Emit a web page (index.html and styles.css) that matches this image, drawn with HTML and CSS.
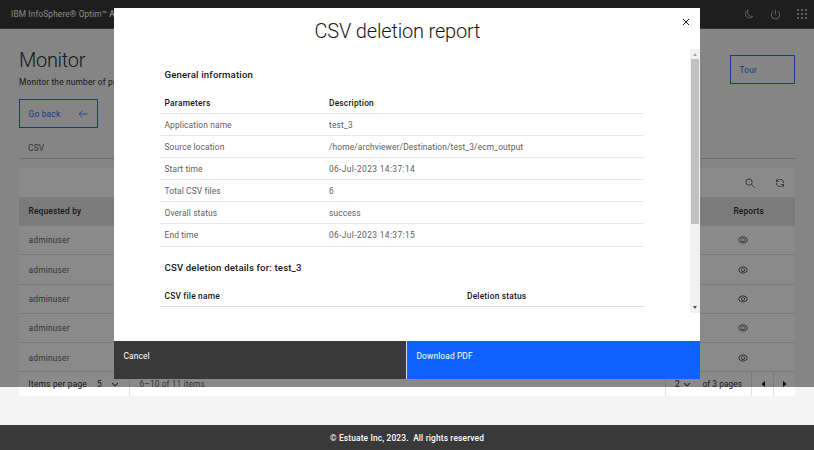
FILE: index.html
```html
<!DOCTYPE html>
<html lang="en">
<head>
<meta charset="utf-8">
<title>Monitor</title>
<link rel="stylesheet" href="styles.css">
</head>
<body>
<svg class="defs" width="0" height="0">
  <symbol id="eye" viewBox="0 0 32 32"><path fill="currentColor" d="M30.94 15.66A16.69 16.69 0 0 0 16 5 16.69 16.69 0 0 0 1.06 15.66a1 1 0 0 0 0 .68A16.69 16.69 0 0 0 16 27a16.69 16.69 0 0 0 14.94-10.66 1 1 0 0 0 0-.68zM16 25c-5.3 0-10.9-3.93-12.93-9C5.1 10.93 10.7 7 16 7s10.9 3.93 12.93 9C26.9 21.07 21.3 25 16 25z"/><path fill="currentColor" d="M16 10a6 6 0 1 0 6 6 6 6 0 0 0-6-6zm0 10a4 4 0 1 1 4-4 4 4 0 0 1-4 4z"/></symbol>
  <symbol id="chevron" viewBox="0 0 16 16"><path fill="currentColor" d="M8 12 3 7l1-1 4 4 4-4 1 1z"/></symbol>
</svg>
<header class="topbar">
  <div class="brand">IBM InfoSphere® Optim™ <b>Archive Viewer</b></div>
  <svg class="moon" viewBox="0 0 10 10"><path fill="none" stroke="currentColor" stroke-width=".9" d="M4.200 1.200C1.500 2 .900 5 2.200 7.100c1.500 2.300 4.900 2.400 6.500.1-1.700.5-3.400 0-4.400-1.400-1-1.500-.9-3.200-.1-4.600z"/></svg>
  <svg class="power" viewBox="0 0 32 32"><path fill="currentColor" d="m22.5 5.74-1 1.73a11 11 0 1 1-11 0l-1-1.73a13 13 0 1 0 13 0z"/><path fill="currentColor" d="M15 2h2v14h-2z"/></svg>
  <svg class="apps" viewBox="0 0 10 10"><path fill="currentColor" d="M0 0h2v2H0zM4 0h2v2H4zM8 0h2v2H8zM0 4h2v2H0zM4 4h2v2H4zM8 4h2v2H8zM0 8h2v2H0zM4 8h2v2H4zM8 8h2v2H8z"/></svg>
</header>
<main class="page">
  <div class="page-head">
    <div>
      <h1>Monitor</h1>
      <p class="lead">Monitor the number of processes</p>
    </div>
    <button class="outline tour">Tour</button>
  </div>
  <button class="outline back"><span>Go back</span><svg viewBox="0 0 16 16"><path fill="none" stroke="currentColor" stroke-width="1.3" d="M15 8H2M7 2.700 1.700 8 7 13.300"/></svg></button>
  <div class="tab">CSV</div>
  <section class="table">
    <div class="toolbar">
      <svg viewBox="0 0 16 16"><path fill="none" stroke="currentColor" stroke-width="1.100" d="M15.300 15.300 10.500 10.500"/><circle cx="6.500" cy="6.500" r="5" fill="none" stroke="currentColor" stroke-width="1.100"/></svg>
      <svg viewBox="0 0 32 32"><path fill="currentColor" d="M12 10H6.780A11 11 0 0 1 27 16h2A13 13 0 0 0 6 7.680V4H4v8h8zM20 22h5.220A11 11 0 0 1 5 16H3a13 13 0 0 0 23 8.320V28h2v-8h-8z"/></svg>
    </div>
    <div class="row head"><span>Requested by</span><span class="rep">Reports</span></div>
    <div class="row"><span>adminuser</span><svg><use href="#eye"/></svg></div>
    <div class="row"><span>adminuser</span><svg><use href="#eye"/></svg></div>
    <div class="row"><span>adminuser</span><svg><use href="#eye"/></svg></div>
    <div class="row"><span>adminuser</span><svg><use href="#eye"/></svg></div>
    <div class="row"><span>adminuser</span><svg><use href="#eye"/></svg></div>
    <div class="pager">
      <div class="per"><span class="per-label">Items per page</span><span>5</span><svg><use href="#chevron"/></svg></div>
      <div class="range">6–10 of 11 items</div>
      <div class="pages"><span>2</span><svg><use href="#chevron"/></svg><span class="of">of 3 pages</span></div>
      <div class="step"><svg viewBox="0 0 4 6"><path d="M4 0v6L.5 3z"/></svg></div>
      <div class="step"><svg viewBox="0 0 4 6"><path d="M0 0v6l3.500-3z"/></svg></div>
    </div>
  </section>
</main>
<footer class="footer">© Estuate Inc, 2023.&nbsp; All rights reserved</footer>

<div class="overlay">
  <div class="modal" role="dialog">
    <div class="modal-head">
      <h2>CSV deletion report</h2>
      <svg class="close" viewBox="0 0 8 8"><path stroke="#161616" stroke-width="1" d="m1 1 6 6M7 1 1 7"/></svg>
    </div>
    <div class="scroller">
      <div class="content">
        <h3>General information</h3>
        <dl class="info">
          <div class="th"><dt>Parameters</dt><dd>Description</dd></div>
          <div><dt>Application name</dt><dd>test_3</dd></div>
          <div><dt>Source location</dt><dd class="path">/home/archviewer/Destination/test_3/ecm_output</dd></div>
          <div><dt>Start time</dt><dd class="date">06-Jul-2023 14:37:14</dd></div>
          <div><dt>Total CSV files</dt><dd>6</dd></div>
          <div><dt>Overall status</dt><dd class="path">success</dd></div>
          <div><dt>End time</dt><dd class="date">06-Jul-2023 14:37:15</dd></div>
        </dl>
        <h3 class="details">CSV deletion details for: test_3</h3>
        <div class="files"><span>CSV file name</span><span>Deletion status</span></div>
      </div>
      <div class="bar"><i class="up"></i><div class="thumb"></div><i class="down"></i></div>
    </div>
    <div class="actions"><button class="cancel">Cancel</button><button class="download">Download PDF</button></div>
  </div>
</div>
</body>
</html>
```

FILE: styles.css
```css
* { box-sizing: border-box; }
body { margin: 0; height: 450px; overflow: hidden; display: flex; flex-direction: column; background: #f4f4f4; color: #161616; font: 8.4px/12px Roboto, "Liberation Sans", sans-serif; letter-spacing: .2px; }
h1, h2, h3, p, dl, dd { margin: 0; }
svg { display: block; flex: none; }
.defs { position: absolute; }
button { font: inherit; letter-spacing: inherit; border-radius: 0; text-align: left; }
.topbar { height: 29px; flex: none; background: #262626; border-bottom: 1px solid #525252; color: #f4f4f4; display: flex; align-items: center; padding: 0 7px 0 11px; }
.brand { flex: 1; letter-spacing: .1px; }
.brand b { font-weight: 500; }
.moon { width: 10px; height: 10px; margin-right: 16px; color: #c6c6c6; }
.power { width: 11px; height: 11px; margin-right: 16px; color: #dadada; }
.apps { width: 10px; height: 10px; color: #a8a8a8; }
.page { padding: 19px 19px 0; flex: 1; }
.page-head { display: flex; justify-content: space-between; height: 51px; }
h1 { font-size: 20px; line-height: 25px; font-weight: 300; letter-spacing: -.3px; }
.lead { margin-top: 3px; letter-spacing: .17px; }
.outline { border: 1px solid #0f62fe; background: none; color: #0f62fe; height: 29px; display: flex; align-items: center; justify-content: space-between; padding: 0 9px 0 8.500px; }
.tour { width: 65px; margin-top: 7px; }
.back { width: 79px; }
.back svg { width: 10px; height: 10px; }
.tab { height: 31px; padding: 14px 9px 0; border-bottom: 1px solid #c6c6c6; color: #525252; }
.table { margin-top: 9px; background: #fff; }
.toolbar { height: 29px; display: flex; align-items: center; justify-content: flex-end; gap: 20px; padding-right: 10px; }
.toolbar svg { width: 10px; height: 10px; }
.row { height: 29.3px; border-bottom: 1px solid #e0e0e0; display: flex; justify-content: space-between; align-items: center; padding: .5px 47px 0 9.500px; color: #525252; }
.row svg { width: 10px; height: 10px; color: #161616; }
.row.head { height: 29px; background: #e0e0e0; color: #161616; font-weight: 500; padding-right: 31px; padding-top: 0; letter-spacing: .16px; }
.pager { height: 24px; display: flex; color: #161616; line-height: 25px; }
.per { width: 111px; border-right: 1px solid #e0e0e0; display: flex; padding-left: 9.500px; align-items: center; }
.per-label { width: 68.500px; }
.per svg { width: 10px; height: 10px; margin-left: 8px; }
.range { flex: 1; padding-left: 9.500px; color: #525252; letter-spacing: .1px; }
.pages { width: 86px; border-left: 1px solid #e0e0e0; display: flex; align-items: center; padding-left: 9px; }
.pages svg { width: 10px; height: 10px; margin-left: 2px; }
.of { margin-left: 10.500px; letter-spacing: .05px; }
.step { width: 22px; border-left: 1px solid #e0e0e0; display: flex; align-items: center; justify-content: center; }
.step svg { width: 4px; height: 6px; }
.footer { height: 25px; flex: none; background: #393939; color: #fff; text-align: center; line-height: 26px; font-weight: 500; letter-spacing: .15px; }
.overlay { position: absolute; inset: 0 0 auto; height: 387px; background: rgba(22, 22, 22, .5); display: flex; justify-content: center; padding: 8px 0; }
.modal { width: 586px; height: 371.400px; background: #fff; display: flex; flex-direction: column; }
.modal-head { height: 41px; display: flex; align-items: flex-start; justify-content: space-between; padding: 10px 10px 0 200.500px; }
h2 { font-size: 20px; line-height: 26px; font-weight: 300; white-space: nowrap; letter-spacing: -.18px; }
.close { width: 8px; height: 8px; }
.scroller { height: 264px; display: flex; justify-content: space-between; }
.content { width: 484px; margin-left: 46px; padding-top: 20px; }
h3 { font-size: 9.600px; line-height: 12px; font-weight: 500; padding-left: 4.500px; letter-spacing: .17px; }
.info { margin-top: 12px; }
.info > div { display: flex; align-items: center; height: 22.100px; border-bottom: 1px solid #e8e8e8; padding-left: 4.500px; color: #5e5e5e; }
.info dt { width: 164.500px; letter-spacing: .13px; }
.info .th { height: 21px; color: #161616; font-weight: 500; }
.info .th dt { letter-spacing: .25px; }
.info .path { letter-spacing: .13px; }
.info .date { letter-spacing: .38px; }
.details { margin-top: 15.500px; letter-spacing: .16px; }
.files { display: grid; grid-template-columns: 302.500px 1fr; height: 33px; padding: 15.500px 0 0 4.500px; border-bottom: 1px solid #e0e0e0; font-weight: 500; }
.bar { width: 10px; background: #f1f1f1; display: flex; flex-direction: column; align-items: center; }
.thumb { width: 8px; height: 165px; background: #c1c1c1; }
.up { margin: 4px 0 3px; border: 2px solid transparent; border-top: 0; border-bottom: 3px solid #a3a3a3; }
.down { margin: auto 0 4px; border: 2px solid transparent; border-bottom: 0; border-top: 3px solid #505050; }
.actions { margin-top: auto; height: 38px; display: flex; gap: 1px; background: #e0e0e0; }
.actions button { border: 0; padding: 9px 9.500px; color: #fff; display: flex; align-items: flex-start; letter-spacing: .12px; }
.cancel { width: 292px; background: #393939; }
.download { flex: 1; background: #0f62fe; }
```
